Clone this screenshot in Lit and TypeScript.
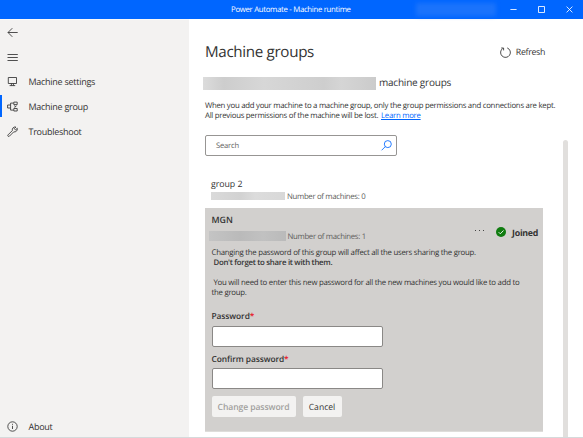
import { LitElement, html, css, svg } from "lit";
import { customElement, property, state } from "lit/decorators.js";
import { classMap } from "lit/directives/class-map.js";

const icons: Record<string, unknown> = {
  back: svg`<path d="M1 5.5H10.7M5.3 1.2 1 5.5 5.3 9.8"/>`,
  menu: svg`<path d="M.5 2.5H10.8M.5 5.5H10.8M.5 8.5H10.8"/>`,
  monitor: svg`<path d="M1.3 1.5H9.5V7.5H1.3ZM4.4 7.5V9.5M6.4 7.5V9.5M2.6 9.6H8.2"/>`,
  group: svg`<path d="M.6 4H3.6V7H.6ZM3.6 4V2.1H6.5M3.6 7V9.1H6.5M6.8 1.1H10.2V3.6H6.8ZM6.8 7.5H10.2V10H6.8ZM7.2 4.7 8.8 5.5 7.4 6.4M8.8 5.5 9.6 4.8"/>`,
  wrench: svg`<path d="M1 8.9 5.3 4.6C4.8 2.5 6.6.5 8.9 1L7.3 2.7 8.5 3.9 10.3 2.3C10.8 4.7 8.7 6.3 6.7 5.9L2.4 10.2C1.4 11 .2 9.8 1 8.9Z"/>`,
  info: svg`<circle cx="5.5" cy="5.5" r="4.7"/><path d="M5.5 4.8V8M5.5 2.8V3.8"/>`,
  refresh: svg`<path d="M7.2 .9A4.9 4.9 0 1 1 2.8 1.4M1.2 1H3.6V3.4"/>`,
  search: svg`<circle cx="6.8" cy="4.1" r="3.5"/><path d="M4.3 6.6.6 10.3"/>`,
  minimize: svg`<path d="M2.4 5.5H8.6"/>`,
  maximize: svg`<path d="M2.5 2.5H8.5V8.5H2.5Z"/>`,
  close: svg`<path d="M2.6 2.6 8.4 8.4M8.4 2.6 2.6 8.4"/>`,
};

@customElement("app-icon")
class AppIcon extends LitElement {
  @property() name = "";
  static styles = css`
    :host { display: block; width: 11px; height: 11px; flex: none; }
    svg { display: block; width: 11px; height: 11px; fill: none; stroke: currentColor; stroke-width: 0.85; overflow: visible; }
  `;
  render() {
    return html`<svg viewBox="0 0 11 11">${icons[this.name]}</svg>`;
  }
}

@customElement("app-root")
class AppRoot extends LitElement {
  @state() private selected = "group";

  private nav = [
    { id: "settings", icon: "monitor", label: "Machine settings" },
    { id: "group", icon: "group", label: "Machine group" },
    { id: "troubleshoot", icon: "wrench", label: "Troubleshoot" },
  ];

  static styles = css`
    :host { display: flex; flex-direction: column; width: 583px; height: 438px; box-sizing: border-box; overflow: hidden;
      background: #fff; border-bottom: 1px solid #d5dadb; color: #333; white-space: nowrap; text-rendering: geometricPrecision;
      font: 8.5px/10px "Open Sans", "Noto Sans", sans-serif; }
    * { box-sizing: border-box; }
    h1, h2, h3, p { margin: 0; font-weight: 400; }
    .titlebar { display: grid; grid-template-columns: 231px 185px 1fr; align-items: center; height: 19px; flex: none; background: #0066ff; color: #fff; }
    .title { grid-column: 2; font-size: 7.8px; letter-spacing: -0.31px; font-weight: 500; padding-top: 1px; }
    .controls { display: flex; align-items: center; }
    .account { width: 80px; height: 13px; margin-right: 12px; border-radius: 2px; background: #1a73fc; filter: blur(2px); }
    .controls app-icon { margin-right: 17px; }
    .body { display: flex; flex: 1; min-height: 0; }
    .side { display: flex; flex-direction: column; width: 189px; background: #f3f2f1; border-top: 1px solid #f8f8f8; }
    .row { display: flex; align-items: center; height: 24.8px; padding-left: 7px; gap: 10.5px; font-size: 9px; letter-spacing: -0.27px; }
    .row.active { background: linear-gradient(#0066ff, #0066ff) 0 1px / 2px 22px no-repeat; }
    .row.about { margin-top: auto; height: 21px; }
    .main { display: flex; flex: 1; }
    .content { width: 374px; padding: 21px 0 0 16px; }
    .scrollbar { width: 5px; margin-top: 121px; border-radius: 3px 3px 0 0; background: #e1dfdd; }
    .head { display: flex; align-items: center; justify-content: space-between; width: 340px; height: 24px; }
    h1 { font-size: 15.2px; line-height: 24px; letter-spacing: -0.34px; }
    .refresh { display: flex; align-items: center; gap: 5px; font-size: 8.8px; letter-spacing: -0.33px; }
    .owner { display: flex; gap: 3px; height: 13px; margin: 13px 0 0 -2px; }
    h2 { font-size: 10px; line-height: 11px; letter-spacing: -0.22px; }
    .redacted { display: block; background: #d2d2d2; }
    .redacted.name { width: 173px; height: 13px; background: linear-gradient(90deg, #dcdcdc, #cdcdcd 12%, #d7d7d7 35%, #cecece 70%, #d5d5d5 80%, #cbcbcb); }
    .redacted.id { width: 74px; height: 8px; background: linear-gradient(90deg, #dadada, #d2d2d2 40%, #dcdcdc 60%, #d8d8d8); }
    .redacted.dark { width: 77px; height: 10px; margin-left: -3px; background: linear-gradient(90deg, #c4c4c4, #bababa 40%, #c1c1c1 70%, #bababa); }
    .desc { margin-top: 11px; font-size: 7.8px; line-height: 10.3px; letter-spacing: -0.265px; }
    .desc a { color: #0066ff; text-decoration: underline; margin-left: 1px; }
    .search { display: flex; align-items: center; justify-content: space-between; width: 191.5px; height: 21px; margin-top: 13px; padding: 0 4px 0 10px;
      border: 1px solid #979593; border-radius: 2px; color: #605e5c; font-size: 7.6px; letter-spacing: -0.2px; }
    .search span { padding-top: 1px; }
    .search app-icon { color: #0066ff; }
    .group { padding-left: 6px; height: 52px; padding-top: 23px; }
    h3 { font-size: 8.8px; line-height: 11px; letter-spacing: -0.05px; }
    .meta { display: flex; align-items: center; gap: 2px; height: 10px; color: #605e5c; font-size: 7.8px; letter-spacing: -0.32px; }
    .meta .count { padding-top: 2px; line-height: 10px; }
    .group .meta { margin-top: 1px; }
    .card { width: 338px; height: 224px; padding: 7px 5px 0 6.5px; background: #d2d0ce; border-bottom: 1px solid #deddda; color: #333; }
    .cardhead { display: flex; justify-content: space-between; height: 33px; }
    .card h3 { font-weight: 600; }
    .card .meta { margin-top: 5px; }
    .status { display: flex; align-items: center; height: 12px; margin-top: 12px; font-size: 8.8px; font-weight: 700; letter-spacing: -0.28px; }
    .dots { display: flex; gap: 3px; margin: -4px 12px 0 0; }
    .dots i { width: 1.2px; height: 1.2px; background: #444; }
    .check { width: 10px; height: 10px; margin: -2px 6px 0 0; }
    .note { font-size: 7.8px; line-height: 10.3px; letter-spacing: -0.255px; }
    .note.indent { text-indent: 2px; }
    .note + .gap { margin-top: 10px; }
    b { font-weight: 600; letter-spacing: -0.27px; }
    .field { display: block; font-size: 8.4px; line-height: 11px; font-weight: 600; letter-spacing: -0.08px; }
    .field em { color: #e81123; font-style: normal; }
    .input { width: 171px; height: 21px; margin-top: 4px; background: #fff; border: 1px solid #8a8886; border-radius: 2px; }
    .first { margin-top: 12px; }
    .second { margin-top: 7.5px; }
    .second + .input { margin-top: 2.5px; }
    .buttons { display: flex; gap: 7px; margin-top: 7px; }
    .btn { height: 21.5px; display: flex; align-items: center; justify-content: center; border-radius: 2px; background: #f3f2f1; font-size: 8.6px; }
    .btn.primary { width: 84px; color: #a19f9d; font-weight: 600; padding-top: 1px; letter-spacing: -0.1px; }
    .btn.cancel { width: 39px; }
  `;

  render() {
    return html`
      <header class="titlebar">
        <span class="title">Power Automate - Machine runtime</span>
        <div class="controls">
          <span class="account"></span>
          ${["minimize", "maximize", "close"].map((n) => html`<app-icon name=${n}></app-icon>`)}
        </div>
      </header>
      <div class="body">
        <nav class="side">
          <div class="row"><app-icon name="back"></app-icon></div>
          <div class="row"><app-icon name="menu"></app-icon></div>
          ${this.nav.map((n) => html`
            <div class=${classMap({ row: true, active: n.id === this.selected })} @click=${() => (this.selected = n.id)}>
              <app-icon name=${n.icon}></app-icon><span>${n.label}</span>
            </div>`)}
          <div class="row about"><app-icon name="info"></app-icon><span>About</span></div>
        </nav>
        <main class="main">
          <div class="content">
            <div class="head">
              <h1>Machine groups</h1>
              <div class="refresh"><app-icon name="refresh"></app-icon><span>Refresh</span></div>
            </div>
            <div class="owner"><span class="redacted name"></span><h2>machine groups</h2></div>
            <p class="desc"><span>When you add your machine to a machine group, only the group permissions and connections are kept.</span><br /><span>All previous permissions of the machine will be lost. </span><a>Learn more</a></p>
            <div class="search"><span>Search</span><app-icon name="search"></app-icon></div>
            <section class="group">
              <h3>group 2</h3>
              <div class="meta"><span class="redacted id"></span><span class="count">Number of machines: 0</span></div>
            </section>
            <section class="card">
              <div class="cardhead">
                <div>
                  <h3>MGN</h3>
                  <div class="meta"><span class="redacted dark"></span><span class="count">Number of machines: 1</span></div>
                </div>
                <div class="status">
                  <span class="dots"><i></i><i></i><i></i></span>
                  <svg class="check" viewBox="0 0 10 10"><circle cx="5" cy="5" r="5" fill="#107c10" /><path d="M2.7 5.2 4.3 6.8 7.5 3.5" fill="none" stroke="#fff" stroke-width=".9" /></svg>
                  <span>Joined</span>
                </div>
              </div>
              <p class="note">Changing the password of this group will affect all the users sharing the group.</p>
              <p class="note indent"><b>Don't forget to share it with them.</b></p>
              <p class="note indent gap">You will need to enter this new password for all the new machines you would like to add to<br />the group.</p>
              <label class="field first">Password<em>*</em></label>
              <div class="input"></div>
              <label class="field second">Confirm password<em>*</em></label>
              <div class="input"></div>
              <div class="buttons"><span class="btn primary">Change password</span><span class="btn cancel">Cancel</span></div>
            </section>
          </div>
          <div class="scrollbar"></div>
        </main>
      </div>
    `;
  }
}
